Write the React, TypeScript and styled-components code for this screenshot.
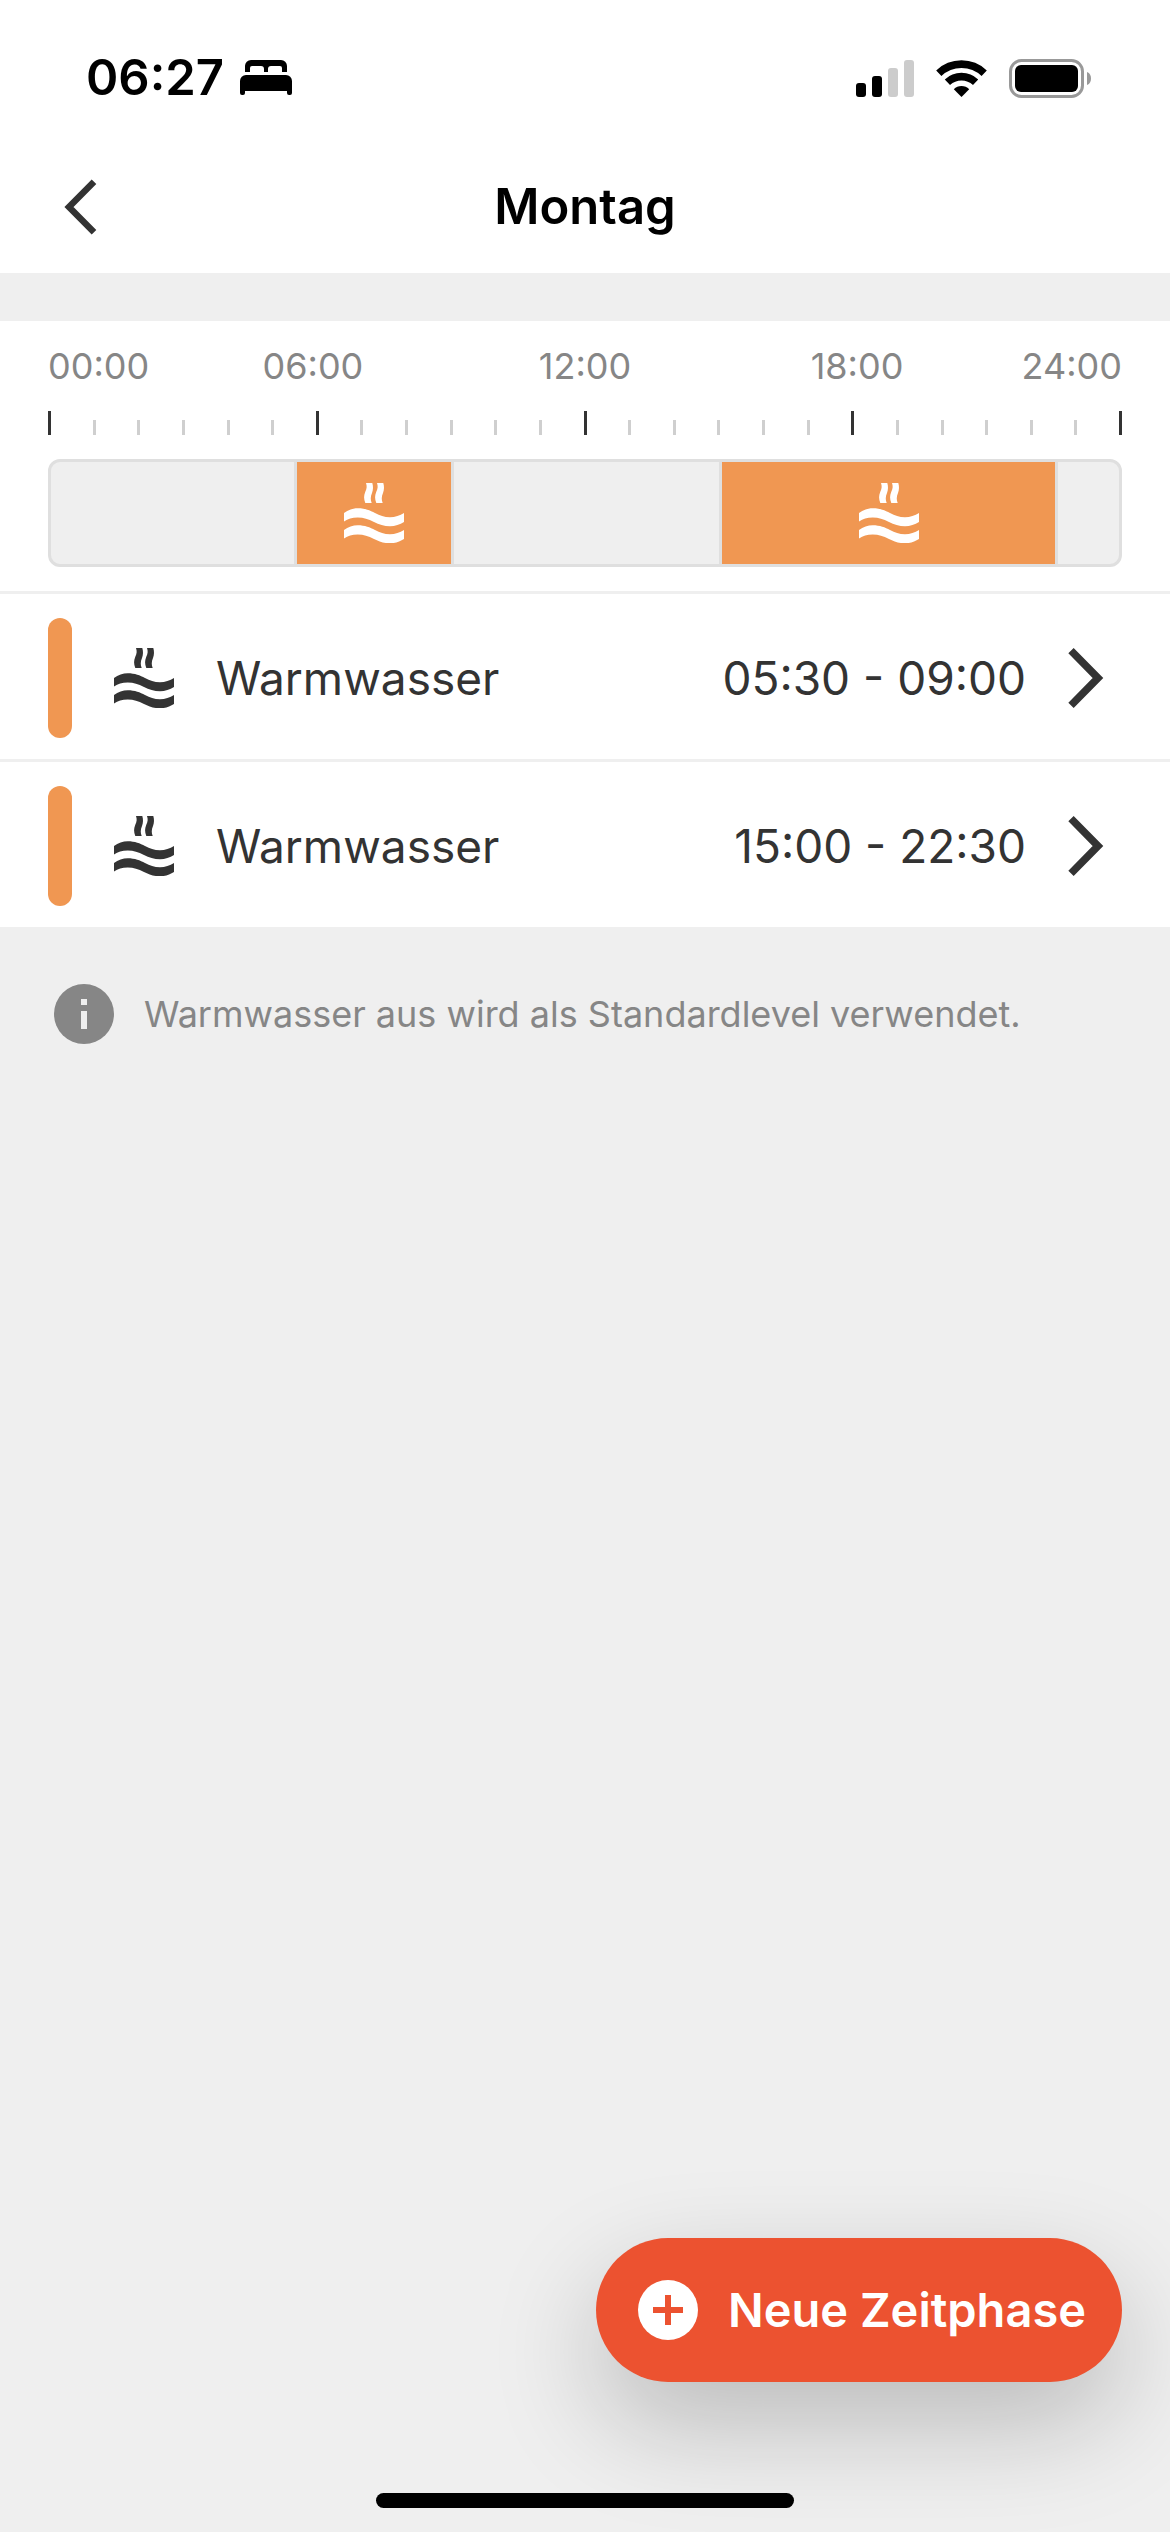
import React from 'react';
import styled, { createGlobalStyle } from 'styled-components';

const GlobalStyle = createGlobalStyle`
  *, *::before, *::after { box-sizing: border-box; }
  body {
    margin: 0;
    background: #efefef;
    color: #333333;
    font-family: Inter, "Liberation Sans", sans-serif;
  }
`;

const Screen = styled.div`
  min-height: 100vh;
  display: flex;
  flex-direction: column;
  background: #efefef;
`;

const StatusBar = styled.div`
  display: flex;
  justify-content: space-between;
  align-items: center;
  height: 156px;
  padding: 0 78px 0 86px;
  background: #ffffff;
  color: #000000;
`;

const Clock = styled.div`
  display: flex;
  align-items: center;
  gap: 16px;
  font-size: 49px;
  line-height: 60px;
  font-weight: 600;
`;

const StatusIcons = styled.div`
  display: flex;
  align-items: center;
  gap: 22px;
`;

const Icon = styled.svg`
  display: block;
  flex: none;
`;

const NavBar = styled.header`
  display: grid;
  grid-template-columns: 1fr auto 1fr;
  align-items: center;
  height: 117px;
  padding: 0 48px 16px;
  background: #ffffff;
`;

const BackButton = styled.button`
  justify-self: start;
  padding: 12px 15px;
  border: 0;
  background: none;
  color: #333333;
  cursor: pointer;
`;

const Title = styled.h1`
  margin: 0;
  font-size: 49px;
  line-height: 60px;
  font-weight: 600;
  color: #000000;
`;

const Timeline = styled.section`
  margin-top: 48px;
  padding: 24px 48px;
  background: #ffffff;
  border-bottom: 3px solid #efefef;
`;

const Hours = styled.div`
  display: grid;
  grid-template-columns: 9fr 19fr 19fr 19fr 9fr;
  font-size: 36px;
  line-height: 42px;
  color: #868686;
`;

const Hour = styled.span<{ $align: 'left' | 'center' | 'right' }>`
  display: flex;
  justify-content: ${(p) =>
    p.$align === 'left' ? 'flex-start' : p.$align === 'right' ? 'flex-end' : 'center'};
  white-space: nowrap;
`;

const Ruler = styled.div`
  display: flex;
  justify-content: space-between;
  align-items: flex-end;
  height: 24px;
  margin: 24px 0;
`;

const Tick = styled.span<{ $major: boolean }>`
  width: 3px;
  height: ${(p) => (p.$major ? 24 : 15)}px;
  background: ${(p) => (p.$major ? '#333333' : '#cfcfcf')};
`;

const Track = styled.div`
  height: 108px;
  border: 3px solid #dfdfdf;
  border-radius: 12px;
  background: #efefef;
  overflow: hidden;
`;

const Spans = styled.div<{ $columns: string }>`
  display: grid;
  grid-template-columns: ${(p) => p.$columns};
  height: 100%;
  margin: 0 -3px;
`;

const Span = styled.div<{ $active: boolean }>`
  display: flex;
  align-items: center;
  justify-content: center;
  min-width: 0;
  color: #ffffff;
  background: ${(p) => (p.$active ? '#f09752' : 'transparent')};
  border-left: 3px solid #dfdfdf;
`;

const Phases = styled.ul`
  margin: 0;
  padding: 0;
  list-style: none;
  background: #ffffff;
`;

const Phase = styled.li`
  & + & {
    border-top: 3px solid #efefef;
  }
`;

const PhaseButton = styled.button`
  display: flex;
  align-items: center;
  width: 100%;
  padding: 24px 66px 21px 48px;
  border: 0;
  background: none;
  color: #333333;
  font: inherit;
  font-size: 46px;
  line-height: 60px;
  text-align: left;
  cursor: pointer;
`;

const Marker = styled.span`
  width: 24px;
  height: 120px;
  margin-right: 42px;
  border-radius: 12px;
  background: #f09752;
`;

const PhaseName = styled.span`
  flex: 1;
  margin-left: 42px;
`;

const PhaseTime = styled.span`
  margin-right: 42px;
`;

const Hint = styled.p`
  display: flex;
  align-items: center;
  gap: 30px;
  margin: 57px 54px 0;
  font-size: 36px;
  line-height: 60px;
  color: #868686;
`;

const Footer = styled.footer`
  display: flex;
  flex-direction: column;
  margin-top: auto;
  padding: 0 48px 24px;
`;

const AddButton = styled.button`
  display: flex;
  align-items: center;
  align-self: flex-end;
  gap: 30px;
  height: 144px;
  margin-bottom: 111px;
  padding: 0 36px 0 42px;
  border: 0;
  border-radius: 72px;
  background: #ec5230;
  color: #ffffff;
  font: inherit;
  font-size: 47px;
  line-height: 60px;
  font-weight: 600;
  box-shadow: 0 42px 108px rgba(0, 0, 0, 0.22);
  cursor: pointer;
`;

const HomeIndicator = styled.div`
  align-self: center;
  width: 418px;
  height: 15px;
  border-radius: 8px;
  background: #000000;
`;

function BedIcon() {
  return (
    <Icon width="52" height="36" viewBox="0 0 52 36" fill="currentColor" aria-hidden="true">
      <path d="M5 12V6a6 6 0 0 1 6-6h30a6 6 0 0 1 6 6v6h-5V8a2 2 0 0 0-2-2H31a3 3 0 0 0-3 3v3h-4V9a3 3 0 0 0-3-3H12a2 2 0 0 0-2 2v4z" />
      <path d="M0 21a6 6 0 0 1 6-6h40a6 6 0 0 1 6 6v12a2 2 0 0 1-2 2h-1a2 2 0 0 1-2-2v-2H5v2a2 2 0 0 1-2 2H2a2 2 0 0 1-2-2z" />
    </Icon>
  );
}

function SignalIcon() {
  return (
    <Icon width="58" height="38" viewBox="0 0 58 38" fill="#000000" aria-hidden="true">
      <rect x="0" y="24" width="10" height="14" rx="3" />
      <rect x="16" y="17" width="10" height="21" rx="3" />
      <rect x="32" y="9" width="10" height="29" rx="3" fill="#cccccc" />
      <rect x="48" y="1" width="10" height="37" rx="3" fill="#cccccc" />
    </Icon>
  );
}

function WifiIcon() {
  return (
    <Icon width="51" height="38" viewBox="0 0 51 38" fill="none" stroke="#000000" aria-hidden="true">
      <path d="M2.8 14.2A33 33 0 0 1 48.2 14.2" strokeWidth="7.6" />
      <path d="M11.4 23.2A20.5 20.5 0 0 1 39.6 23.2" strokeWidth="7.6" />
      <path d="M25.5 38L17.8 30.2a11 11 0 0 1 15.4 0z" fill="#000000" stroke="none" />
    </Icon>
  );
}

function BatteryIcon() {
  return (
    <Icon width="83" height="39" viewBox="0 0 83 39" aria-hidden="true">
      <rect x="1.5" y="1.5" width="72" height="36" rx="11" fill="none" stroke="#999999" strokeWidth="3" />
      <rect x="6" y="6" width="63" height="27" rx="6" fill="#000000" />
      <path d="M78 13c3 1 4 4 4 6.5s-1 5.500-4 6.500z" fill="#999999" />
    </Icon>
  );
}

const STEAM =
  'M22 0H28.3C29.3 3 29.3 7 28 10C26.3 14 26.5 17 27.7 20H21.3C19.7 16 19.7 12.5 21.2 9C23 5.5 23 3 22 0Z';
const WAVE =
  'M0 30C4 27 9 25.3 13.7 25.3C21 25.3 26 27.5 31 30C36 32.5 40 34.3 46 34.3C51 34.3 56 32.5 60 30V39C56 41.5 51 43.3 46 43.3C40 43.3 35 41.5 30 39C24 36 20 34.5 13.7 34.5C8 34.5 4 36 0 38.6Z';

function HotWaterIcon() {
  return (
    <Icon width="60" height="60" viewBox="0 0 60 60" fill="currentColor" aria-hidden="true">
      <path d={STEAM} />
      <path d={STEAM} transform="translate(11 0)" />
      <path d={WAVE} />
      <path d={WAVE} transform="translate(0 17)" />
    </Icon>
  );
}

function BackIcon() {
  return (
    <Icon width="36" height="56" viewBox="0 0 36 56" fill="none" stroke="currentColor" strokeWidth="6.5" aria-hidden="true">
      <path d="M31 2.8L6 28L31 53.2" />
    </Icon>
  );
}

function ForwardIcon() {
  return (
    <Icon width="36" height="60" viewBox="0 0 36 60" fill="none" stroke="currentColor" strokeWidth="7.5" aria-hidden="true">
      <path d="M3 2.7L30 30L3 57.3" />
    </Icon>
  );
}

function InfoIcon() {
  return (
    <Icon width="60" height="60" viewBox="0 0 60 60" aria-hidden="true">
      <circle cx="30" cy="30" r="30" fill="#868686" />
      <path d="M27 15h6v6h-6zM27 27h6v18h-6z" fill="#efefef" />
    </Icon>
  );
}

function PlusIcon() {
  return (
    <Icon width="60" height="60" viewBox="0 0 60 60" aria-hidden="true">
      <circle cx="30" cy="30" r="30" fill="#ffffff" />
      <path d="M27 15h6v12h12v6H33v12h-6V33H15v-6h12z" fill="#ec5230" />
    </Icon>
  );
}

const HOURS = [
  { label: '00:00', align: 'left' },
  { label: '06:00', align: 'center' },
  { label: '12:00', align: 'center' },
  { label: '18:00', align: 'center' },
  { label: '24:00', align: 'right' },
] as const;

const SPANS = [
  { hours: 5.5, active: false },
  { hours: 3.5, active: true },
  { hours: 6, active: false },
  { hours: 7.5, active: true },
  { hours: 1.5, active: false },
];

const PHASES = ['05:30 - 09:00', '15:00 - 22:30'];

export default function App() {
  return (
    <Screen>
      <GlobalStyle />
      <StatusBar>
        <Clock>
          06:27
          <BedIcon />
        </Clock>
        <StatusIcons>
          <SignalIcon />
          <WifiIcon />
          <BatteryIcon />
        </StatusIcons>
      </StatusBar>
      <NavBar>
        <BackButton type="button" aria-label="Zurück">
          <BackIcon />
        </BackButton>
        <Title>Montag</Title>
      </NavBar>
      <main>
        <Timeline>
          <Hours>
            {HOURS.map((h) => (
              <Hour key={h.label} $align={h.align}>
                {h.label}
              </Hour>
            ))}
          </Hours>
          <Ruler>
            {Array.from({ length: 25 }, (_, i) => (
              <Tick key={i} $major={i % 6 === 0} />
            ))}
          </Ruler>
          <Track>
            <Spans $columns={SPANS.map((s) => `${s.hours}fr`).join(' ')}>
              {SPANS.map((s, i) => (
                <Span key={i} $active={s.active}>
                  {s.active && <HotWaterIcon />}
                </Span>
              ))}
            </Spans>
          </Track>
        </Timeline>
        <Phases>
          {PHASES.map((time) => (
            <Phase key={time}>
              <PhaseButton type="button">
                <Marker />
                <HotWaterIcon />
                <PhaseName>Warmwasser</PhaseName>
                <PhaseTime>{time}</PhaseTime>
                <ForwardIcon />
              </PhaseButton>
            </Phase>
          ))}
        </Phases>
        <Hint>
          <InfoIcon />
          Warmwasser aus wird als Standardlevel verwendet.
        </Hint>
      </main>
      <Footer>
        <AddButton type="button">
          <PlusIcon />
          Neue Zeitphase
        </AddButton>
        <HomeIndicator />
      </Footer>
    </Screen>
  );
}
